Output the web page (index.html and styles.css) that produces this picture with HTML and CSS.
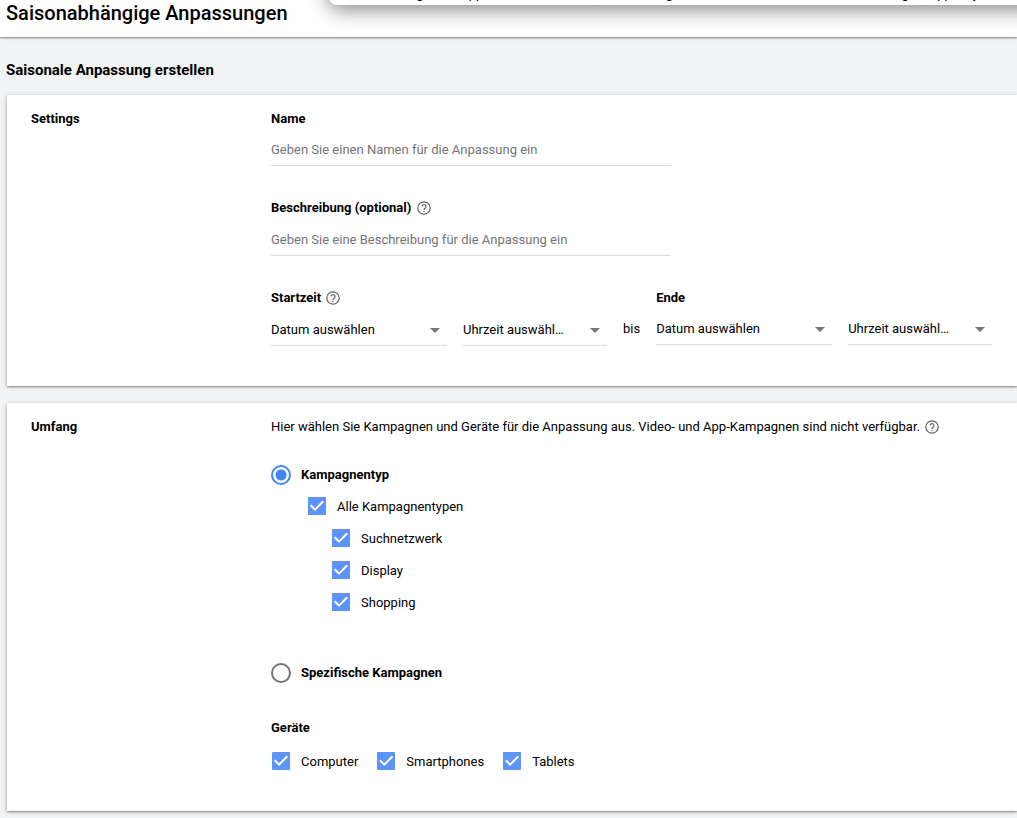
FILE: index.html
```html
<!DOCTYPE html>
<html lang="de">
<head>
  <meta charset="UTF-8">
  <meta name="viewport" content="width=device-width, initial-scale=1.0">
  <title>Saisonabhängige Anpassungen</title>
  <link rel="stylesheet" href="styles.css">
</head>
<body>

  <!-- Help icon, reused below -->
  <svg width="0" height="0" class="sprite" aria-hidden="true">
    <symbol id="help" viewBox="0 0 14 14">
      <circle cx="7" cy="7" r="6.2" fill="none" stroke="currentColor" stroke-width="1.2"/>
      <path d="M5 5.6a2 2 0 1 1 3.3 1.5C7.5 7.7 7 8 7 8.9" fill="none" stroke="currentColor" stroke-width="1.2"/>
      <rect x="6.4" y="9.8" width="1.2" height="1.2" fill="currentColor"/>
    </symbol>
  </svg>

  <header class="topbar">
    <h1>Saisonabhängige Anpassungen</h1>
    <div class="notice">Einstellungen für App-Kunden der Saison, Verwendung mit dem Konto oder als Standard festlegen, App only</div>
  </header>

  <main>
    <h2>Saisonale Anpassung erstellen</h2>

    <!-- Settings -->
    <section class="card card-settings">
      <h3>Settings</h3>
      <div class="content">
        <div class="field">
          <label for="name">Name</label>
          <input type="text" id="name" placeholder="Geben Sie einen Namen für die Anpassung ein">
        </div>
        <div class="field">
          <label for="desc" class="with-help">Beschreibung (optional) <svg class="help"><use href="#help"/></svg></label>
          <input type="text" id="desc" placeholder="Geben Sie eine Beschreibung für die Anpassung ein">
        </div>
        <div class="period">
          <div class="field">
            <label for="start-date" class="with-help">Startzeit <svg class="help"><use href="#help"/></svg></label>
            <div class="selects">
              <div class="select date">
                <select id="start-date"><option>Datum auswählen</option></select>
              </div>
              <div class="select time">
                <select aria-label="Startzeit Uhrzeit"><option>Uhrzeit auswählen</option></select>
              </div>
            </div>
          </div>
          <span class="until">bis</span>
          <div class="field">
            <label for="end-date">Ende</label>
            <div class="selects">
              <div class="select date">
                <select id="end-date"><option>Datum auswählen</option></select>
              </div>
              <div class="select time">
                <select aria-label="Ende Uhrzeit"><option>Uhrzeit auswählen</option></select>
              </div>
            </div>
          </div>
        </div>
      </div>
    </section>

    <!-- Scope -->
    <section class="card card-scope">
      <h3>Umfang</h3>
      <div class="content">
        <p class="intro">Hier wählen Sie Kampagnen und Geräte für die Anpassung aus. Video- und App-Kampagnen sind nicht verfügbar. <svg class="help"><use href="#help"/></svg></p>

        <label class="radio"><input type="radio" name="scope" checked>Kampagnentyp</label>
        <div class="types">
          <label class="check"><input type="checkbox" checked>Alle Kampagnentypen</label>
          <div class="subtypes">
            <label class="check"><input type="checkbox" checked>Suchnetzwerk</label>
            <label class="check"><input type="checkbox" checked>Display</label>
            <label class="check"><input type="checkbox" checked>Shopping</label>
          </div>
        </div>
        <label class="radio"><input type="radio" name="scope">Spezifische Kampagnen</label>

        <h4>Geräte</h4>
        <div class="devices">
          <label class="check"><input type="checkbox" checked>Computer</label>
          <label class="check"><input type="checkbox" checked>Smartphones</label>
          <label class="check"><input type="checkbox" checked>Tablets</label>
        </div>
      </div>
    </section>
  </main>

</body>
</html>
```
FILE: styles.css
```css
* {
  box-sizing: border-box;
}

body {
  margin: 0;
  background-color: #f1f3f4;
  color: #000;
  font-family: Roboto, Arial, sans-serif;
  font-size: 13px;
  line-height: 16px;
  overflow-x: hidden;
}

h1, h2, h3, h4, p {
  margin: 0;
}

.sprite {
  position: absolute;
}

/* Top bar */
.topbar {
  position: relative;
  height: 37px;
  padding-left: 6px;
  background-color: #fff;
  box-shadow: 0 1px 1px rgba(0, 0, 0, 0.2), 0 1px 3px rgba(0, 0, 0, 0.3);
}

.topbar h1 {
  font-size: 20px;
  font-weight: 500;
  line-height: 26px;
}

/* Panel that hangs in from above the page */
.notice {
  position: absolute;
  top: -19px;
  left: 329px;
  right: -24px;
  height: 24px;
  padding: 5px 31px;
  background-color: #fff;
  border-radius: 8px;
  box-shadow: 0 4px 20px rgba(0, 0, 0, 0.5);
  white-space: nowrap;
}

main {
  padding-left: 7px;
}

h2 {
  margin-left: -1px;
  padding: 24px 0 16px;
  font-size: 15px;
  font-weight: 700;
  line-height: 18px;
}

/* Cards */
.card {
  display: flex;
  margin-bottom: 17px;
  background-color: #fff;
  box-shadow: 0 1px 1px rgba(0, 0, 0, 0.2), 0 1px 4px rgba(0, 0, 0, 0.3);
}

.card-settings {
  padding: 16px 24px 40px;
}

.card-scope {
  padding: 16px 24px 34px;
  margin-bottom: 7px;
}

.card h3 {
  flex: 0 0 240px;
  font-size: 13px;
  font-weight: 700;
}

.content {
  flex: 1;
}

.help {
  width: 14px;
  height: 14px;
  margin-left: 2px;
  color: #5f6368;
  vertical-align: -3px;
}

/* Text fields */
.field {
  margin-bottom: 34px;
}

.field label {
  display: block;
  height: 16px;
  margin-bottom: 7px;
  font-weight: 700;
}

.field .with-help {
  height: 17px;
}

.field input {
  display: block;
  width: 400px;
  max-width: 100%;
  height: 32px;
  padding: 0;
  border: 0;
  border-bottom: 1px solid #dadce0;
  background: none;
  font: inherit;
  outline: none;
}

.field input::placeholder {
  color: #757575;
}

/* Start and end */
.period {
  display: flex;
  align-items: flex-start;
  gap: 16px;
}

.period .field {
  margin-bottom: 0;
}

.selects {
  display: flex;
  gap: 16px;
}

.select {
  position: relative;
}

.select::after {
  content: "";
  position: absolute;
  top: 14px;
  right: 7px;
  border: 5px solid transparent;
  border-top-color: #757575;
  border-bottom: 0;
  pointer-events: none;
}

.select select {
  display: block;
  width: 100%;
  height: 32px;
  padding: 0 40px 0 0;
  border: 0;
  border-bottom: 1px solid #dadce0;
  border-radius: 0;
  background: none;
  color: inherit;
  font: inherit;
  text-overflow: ellipsis;
  appearance: none;
  outline: none;
}

.date {
  width: 176px;
}

.time {
  width: 144px;
}

.until {
  padding-top: 23px;
  line-height: 32px;
}

/* Radios and checkboxes */
.radio,
.check {
  display: flex;
  align-items: center;
  gap: 10px;
}

.radio {
  height: 30px;
  font-weight: 700;
}

.check {
  height: 32px;
  line-height: 17px;
}

.radio input {
  appearance: none;
  width: 20px;
  height: 20px;
  margin: 0;
  border: 2px solid #757575;
  border-radius: 50%;
}

.radio input:checked {
  border-color: #4285f4;
  background: radial-gradient(circle, #4285f4 5px, transparent 6px);
}

.check input {
  appearance: none;
  width: 18px;
  height: 18px;
  margin: 0 1px;
  border-radius: 1px;
  background-color: #5c95f7;
}

.check input::before {
  content: "";
  display: block;
  height: 18px;
  background-color: #fff;
  clip-path: polygon(39% 78%, 11% 50%, 19% 42%, 39% 62%, 81% 20%, 89% 28%);
}

.check input:not(:checked) {
  background-color: transparent;
  border: 2px solid #757575;
}

.check input:not(:checked)::before {
  display: none;
}

.intro {
  height: 16px;
  margin-bottom: 25px;
}

.types {
  margin: 0 0 40px 36px;
}

.subtypes {
  margin-left: 24px;
}

.card-scope h4 {
  margin: 32px 0 9px;
  font-size: 13px;
  font-weight: 700;
}

.devices {
  display: flex;
  gap: 18px;
}
```
